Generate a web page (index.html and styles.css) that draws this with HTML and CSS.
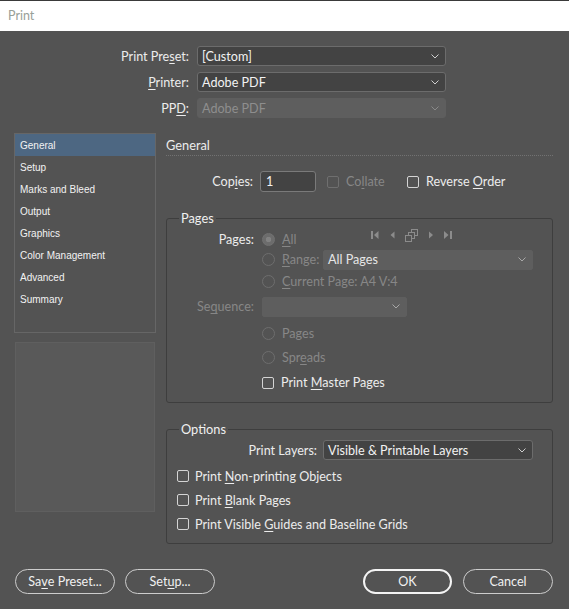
FILE: index.html
```html
<!DOCTYPE html>
<html>
<head>
<meta charset="utf-8">
<title>Print</title>
<link rel="stylesheet" href="styles.css">
</head>
<body>
<div class="window">
  <div class="titlebar">Print</div>

  <div class="top-form">
    <div class="lbl">Print Pre<u>s</u>et:</div>
    <div class="select"><span>[Custom]</span><svg class="chev" width="8" height="5" viewBox="0 0 8 5"><path d="M0.5 0.5 L4 4 L7.5 0.5" fill="none" stroke="#cfcfcf" stroke-width="1"/></svg></div>
    <div class="lbl"><u>P</u>rinter:</div>
    <div class="select"><span>Adobe PDF</span><svg class="chev" width="8" height="5" viewBox="0 0 8 5"><path d="M0.5 0.5 L4 4 L7.5 0.5" fill="none" stroke="#cfcfcf" stroke-width="1"/></svg></div>
    <div class="lbl">PP<u>D</u>:</div>
    <div class="select disabled"><span>Adobe PDF</span><svg class="chev" width="8" height="5" viewBox="0 0 8 5"><path d="M0.5 0.5 L4 4 L7.5 0.5" fill="none" stroke="#8a8a8a" stroke-width="1"/></svg></div>
  </div>

  <div class="main">
    <div class="left">
      <ul class="nav">
        <li class="active">General</li>
        <li>Setup</li>
        <li>Marks and Bleed</li>
        <li>Output</li>
        <li>Graphics</li>
        <li>Color Management</li>
        <li>Advanced</li>
        <li>Summary</li>
      </ul>
      <div class="preview"></div>
    </div>

    <div class="right">
      <div class="section-title">General</div>

      <div class="copies-row">
        <div class="copies-lbl">Cop<u>i</u>es:</div>
        <div class="textbox">1</div>
        <div class="check-item collate dim"><span class="box"></span><span>Co<u>l</u>late</span></div>
        <div class="check-item"><span class="box"></span><span>Reverse <u>O</u>rder</span></div>
      </div>

      <fieldset class="group pages">
        <legend>Pages</legend>
        <div class="row r1">
          <div class="row-lbl">Pages:</div>
          <div class="radio-item dim all"><span class="radio on"></span><span><u>A</u>ll</span></div>
          <svg class="pagenav" width="83" height="13" viewBox="0 0 83 13">
            <g fill="#8c8c8c">
              <rect x="0" y="2" width="2" height="8"/>
              <polygon points="7.5,2 7.5,10 3,6"/>
              <polygon points="23.5,2.5 23.5,9.5 19.5,6"/>
              <polygon points="58,2.5 58,9.5 62,6"/>
              <polygon points="73,2 73,10 77.5,6"/>
              <rect x="79" y="2" width="2" height="8"/>
            </g>
            <g fill="#535353" stroke="#8c8c8c" stroke-width="1">
              <rect x="40.5" y="0.5" width="6" height="6"/>
              <rect x="37.5" y="3.5" width="6" height="6"/>
              <rect x="34.5" y="6.5" width="6" height="6"/>
            </g>
          </svg>
        </div>
        <div class="row r2">
          <div class="row-lbl"></div>
          <div class="radio-item dim range"><span class="radio"></span><span><u>R</u>ange:</span></div>
          <div class="select flat range-select"><span>All Pages</span><svg class="chev" width="8" height="5" viewBox="0 0 8 5"><path d="M0.5 0.5 L4 4 L7.5 0.5" fill="none" stroke="#a8a8a8" stroke-width="1"/></svg></div>
        </div>
        <div class="row r3">
          <div class="row-lbl"></div>
          <div class="radio-item dim"><span class="radio"></span><span><u>C</u>urrent Page: A4 V:4</span></div>
        </div>
        <div class="row r4">
          <div class="row-lbl dim">Se<u>q</u>uence:</div>
          <div class="select flat seq-select"><span></span><svg class="chev" width="8" height="5" viewBox="0 0 8 5"><path d="M0.5 0.5 L4 4 L7.5 0.5" fill="none" stroke="#a8a8a8" stroke-width="1"/></svg></div>
        </div>
        <div class="row r5">
          <div class="row-lbl"></div>
          <div class="radio-item dim"><span class="radio"></span><span>Pages</span></div>
        </div>
        <div class="row r6">
          <div class="row-lbl"></div>
          <div class="radio-item dim"><span class="radio"></span><span>Spr<u>e</u>ads</span></div>
        </div>
        <div class="row r7">
          <div class="row-lbl"></div>
          <div class="check-item"><span class="box"></span><span>Print <u>M</u>aster Pages</span></div>
        </div>
      </fieldset>

      <fieldset class="group options">
        <legend>Options</legend>
        <div class="row layers-row">
          <div class="layers-lbl">Print Layers:</div>
          <div class="select layers-select"><span>Visible &amp; Printable Layers</span><svg class="chev" width="8" height="5" viewBox="0 0 8 5"><path d="M0.5 0.5 L4 4 L7.5 0.5" fill="none" stroke="#cfcfcf" stroke-width="1"/></svg></div>
        </div>
        <div class="opt-row first"><div class="check-item"><span class="box"></span><span>Print <u>N</u>on-printing Objects</span></div></div>
        <div class="opt-row"><div class="check-item"><span class="box"></span><span>Print <u>B</u>lank Pages</span></div></div>
        <div class="opt-row"><div class="check-item"><span class="box"></span><span>Print Visible <u>G</u>uides and Baseline Grids</span></div></div>
      </fieldset>
    </div>
  </div>

  <div class="buttons">
    <div class="btn save">Sa<u>v</u>e Preset...</div>
    <div class="btn setup">Set<u>u</u>p...</div>
    <div class="spacer"></div>
    <div class="btn ok">OK</div>
    <div class="btn cancel">Cancel</div>
  </div>
</div>
</body>
</html>
```

FILE: styles.css
```css
* { box-sizing: border-box; }
html, body { margin: 0; padding: 0; }
body {
  background: #535353;
  width: 569px;
  height: 609px;
  overflow: hidden;
  font-family: Lato, "Noto Sans", sans-serif;
  font-size: 12.6px;
  color: #ececec;
}
u { text-underline-offset: 2px; }
.dim { color: #878787; }

.window { border-top: 1px solid #3a3a3a; }
.titlebar {
  height: 30px;
  background: #ffffff;
  color: #98a098;
  padding-left: 8px;
  line-height: 30px;
  font-size: 12.5px;
}

.top-form {
  display: grid;
  grid-template-columns: 189px 249px;
  grid-auto-rows: 20px;
  column-gap: 8px;
  row-gap: 6px;
  margin-top: 15px;
  align-items: center;
}
.lbl { text-align: right; }

.select {
  height: 20px;
  display: flex;
  align-items: center;
  justify-content: space-between;
  padding: 0 6px 0 4px;
  border: 1px solid #6c6c6c;
  border-radius: 3px;
  background: #434343;
  color: #f2f2f2;
}
.select.disabled {
  border-color: #5e5e5e;
  background: #5e5e5e;
  color: #8e8e8e;
}
.select.flat {
  border-color: #5e5e5e;
  background: #5e5e5e;
  color: #e6e6e6;
  border-radius: 2px;
}
.chev { flex: none; }

.main {
  display: flex;
  margin-top: 15px;
  padding-left: 14px;
  gap: 10px;
}
.left {
  width: 142px;
  display: flex;
  flex-direction: column;
}
.nav {
  list-style: none;
  margin: 0;
  padding: 0;
  height: 200px;
  border: 1px solid #666666;
  font-family: "Liberation Sans", Arial, sans-serif;
  font-size: 10px;
  color: #f2f2f2;
}
.nav li {
  height: 22px;
  line-height: 22px;
  padding: 1px 0 0 5px;
}
.nav li.active { background: #4d6782; }
.preview {
  margin: 9px 0 0 1px;
  width: 140px;
  height: 170px;
  background: #595959;
  border: 1px solid #5f5f5f;
}

.right {
  width: 387px;
  display: flex;
  flex-direction: column;
}
.section-title {
  padding-top: 2px;
  line-height: 20px;
  font-size: 12.8px;
  border-bottom: 1px dotted #727272;
}

.copies-row {
  display: flex;
  align-items: center;
  height: 21px;
  margin-top: 15px;
}
.copies-lbl {
  width: 87px;
  text-align: right;
  margin-right: 7px;
}
.textbox {
  width: 56px;
  height: 21px;
  border: 1px solid #7a7a7a;
  border-radius: 3px;
  background: #434343;
  padding-left: 5px;
  line-height: 19px;
  color: #f2f2f2;
}
.check-item {
  display: flex;
  align-items: center;
  gap: 7px;
}
.collate { margin-left: 11px; width: 80px; }
.box {
  width: 12px;
  height: 12px;
  border: 1px solid #d4d4d4;
  border-radius: 2px;
  flex: none;
}
.dim .box { border-color: #6f6f6f; }

.group {
  margin: 18px 0 0 0;
  padding: 0 0 9px 0;
  border: 1px solid #3e3e3e;
  border-radius: 3px;
  min-width: 0;
}
.group legend {
  margin-left: 12px;
  padding: 0 2px;
  line-height: 16px;
  font-size: 12.8px;
  color: #f0f0f0;
}
.group.options { padding-bottom: 7px; }

.row {
  display: flex;
  align-items: center;
}
.row-lbl {
  width: 87px;
  margin-right: 8px;
  text-align: right;
  flex: none;
}
.r1 { height: 20px; margin-top: 3px; }
.r2 { height: 21px; }
.r3 { height: 22px; }
.r4 { height: 21px; margin-top: 4px; }
.r5 { height: 21px; margin-top: 6px; }
.r6 { height: 21px; margin-top: 3px; }
.r7 { height: 21px; margin-top: 4px; }

.radio-item {
  display: flex;
  align-items: center;
  gap: 7px;
}
.radio {
  width: 13px;
  height: 13px;
  border-radius: 50%;
  border: 1px solid #6e6e6e;
  flex: none;
}
.radio.on {
  background: radial-gradient(circle, #828282 0 2.5px, #6c6c6c 3px);
  border-color: #727272;
}
.all { width: 109px; }
.pagenav { align-self: flex-start; }
.range { width: 61px; }
.range-select { width: 210px; }
.seq-select { width: 145px; }

.options .layers-row { margin-top: 3px; height: 20px; }
.layers-lbl {
  width: 150px;
  margin-right: 6px;
  text-align: right;
}
.layers-select { width: 210px; }
.opt-row {
  height: 24px;
  display: flex;
  align-items: center;
  padding-left: 10px;
}
.opt-row.first { margin-top: 4px; }
.options .check-item { gap: 6px; }

.buttons {
  display: flex;
  margin-top: 25px;
  padding: 0 16px 0 15px;
}
.btn {
  height: 25px;
  border: 1px solid #cdcdcd;
  border-radius: 13px;
  display: flex;
  align-items: center;
  justify-content: center;
  color: #f0f0f0;
}
.save { width: 100px; }
.setup { width: 90px; margin-left: 10px; }
.spacer { flex: 1; }
.ok { width: 89px; border: 2px solid #f4f4f4; }
.cancel { width: 90px; margin-left: 11px; }
```
